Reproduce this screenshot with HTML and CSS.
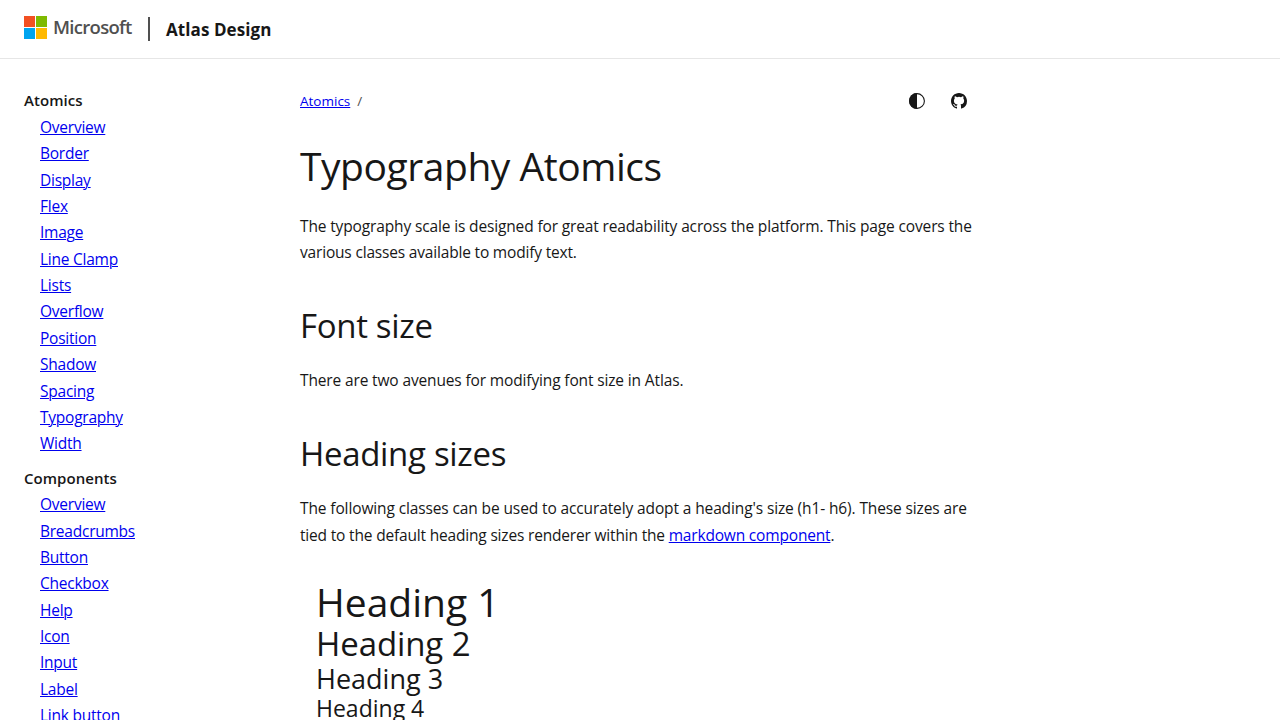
FILE: index.html
```html
<!DOCTYPE html>
<html lang="en">
<head>
<meta charset="utf-8">
<title>Typography Atomics - Atlas Design</title>
<link rel="stylesheet" href="styles.css">
</head>
<body>
<header class="header">
  <a class="brand">
    <svg class="brand-mark" width="23" height="23" viewBox="0 0 23 23" shape-rendering="crispEdges"><path fill="#f25022" d="M0 0h11v11H0z"/><path fill="#7fba00" d="M12 0h11v11H12z"/><path fill="#00a4ef" d="M0 12h11v11H0z"/><path fill="#ffb900" d="M12 12h11v11H12z"/></svg>
    <span class="brand-name">Microsoft</span>
  </a>
  <span class="divider"></span>
  <span class="site-name">Atlas Design</span>
</header>
<div class="layout">
  <nav class="sidebar">
    <section class="group">
      <p class="group-title">Atomics</p>
      <ul class="links">
        <li><a href="#">Overview</a></li>
        <li><a href="#">Border</a></li>
        <li><a href="#">Display</a></li>
        <li><a href="#">Flex</a></li>
        <li><a href="#">Image</a></li>
        <li><a href="#">Line Clamp</a></li>
        <li><a href="#">Lists</a></li>
        <li><a href="#">Overflow</a></li>
        <li><a href="#">Position</a></li>
        <li><a href="#">Shadow</a></li>
        <li><a href="#">Spacing</a></li>
        <li><a href="#">Typography</a></li>
        <li><a href="#">Width</a></li>
      </ul>
    </section>
    <section class="group">
      <p class="group-title">Components</p>
      <ul class="links">
        <li><a href="#">Overview</a></li>
        <li><a href="#">Breadcrumbs</a></li>
        <li><a href="#">Button</a></li>
        <li><a href="#">Checkbox</a></li>
        <li><a href="#">Help</a></li>
        <li><a href="#">Icon</a></li>
        <li><a href="#">Input</a></li>
        <li><a href="#">Label</a></li>
        <li><a href="#">Link button</a></li>
      </ul>
    </section>
  </nav>
  <main class="content">
    <div class="toolbar">
      <div class="crumbs"><a href="#">Atomics</a><span class="slash">/</span></div>
      <div class="actions">
        <svg width="16" height="16" viewBox="0 0 16 16"><circle cx="8" cy="8" r="7.4" fill="none" stroke="#171717" stroke-width="1.1"/><path fill="#171717" d="M8 0a8 8 0 0 0 0 16z"/></svg>
        <svg width="16" height="16" viewBox="0 0 16 16"><path fill="#171717" d="M8 0C3.58 0 0 3.58 0 8c0 3.54 2.29 6.53 5.47 7.59.4.07.55-.17.55-.38 0-.19-.01-.82-.01-1.49-2.01.37-2.53-.49-2.69-.94-.09-.23-.48-.94-.82-1.13-.28-.15-.68-.52-.01-.53.63-.01 1.08.58 1.23.82.72 1.21 1.87.87 2.33.66.07-.52.28-.87.51-1.07-1.78-.2-3.64-.89-3.64-3.95 0-.87.31-1.59.82-2.15-.08-.2-.36-1.02.08-2.12 0 0 .67-.21 2.2.82a7.6 7.6 0 0 1 4 0c1.53-1.04 2.2-.82 2.2-.82.44 1.1.16 1.92.08 2.12.51.56.82 1.27.82 2.15 0 3.07-1.87 3.75-3.65 3.95.29.25.54.73.54 1.48 0 1.07-.01 1.93-.01 2.2 0 .21.15.46.55.38A8.01 8.01 0 0 0 16 8c0-4.42-3.58-8-8-8z"/></svg>
      </div>
    </div>
    <h1 class="title">Typography Atomics</h1>
    <p class="text intro">The typography scale is designed for great readability across the platform. This page covers the<br><span class="tight">various classes available to modify text.</span></p>
    <h2 class="subtitle">Font size</h2>
    <p class="text">There are two avenues for modifying font size in Atlas.</p>
    <h2 class="subtitle">Heading sizes</h2>
    <p class="text sizes">The following classes can be used to accurately adopt a heading's size (h1- h6). These sizes are<br><span class="tight">tied to the default heading sizes renderer within the <a href="#">markdown component</a>.</span></p>
    <div class="sample">
      <p class="size-h1">Heading 1</p>
      <p class="size-h2">Heading 2</p>
      <p class="size-h3">Heading 3</p>
      <p class="size-h4">Heading 4</p>
    </div>
  </main>
</div>
</body>
</html>
```
FILE: styles.css
```css
* { box-sizing: border-box; margin: 0; padding: 0; }
html, body { height: 720px; overflow: hidden; }
body {
  background: #fff;
  color: #171717;
  font-family: "Open Sans", "Noto Sans", sans-serif;
  font-size: 15.5px;
  line-height: 26.36px;
}
a[href] { color: #0000ee; text-decoration: underline; text-underline-offset: 1px; text-decoration-thickness: 1px; }
.header {
  display: flex;
  align-items: center;
  height: 59px;
  padding: 0 24px;
  border-bottom: 1px solid #e6e6e6;
}
.brand { display: flex; align-items: center; gap: 6px; padding-bottom: 3px; }
.brand-mark { display: block; }
.brand-name { width: 80px; color: #505050; font-size: 18.5px; font-weight: 600; letter-spacing: -0.7px; line-height: 21px; padding-bottom: 2px; }
.divider { width: 2px; height: 24px; margin: 0 16px 0 15px; background: #505050; }
.site-name { padding-top: 2px; font-size: 17px; font-weight: 700; letter-spacing: 0.08px; }
.layout { display: flex; height: 661px; }
.sidebar { width: 276px; padding: 28.4px 0 0 24px; }
.group { margin-bottom: 8px; }
.group-title { font-weight: 600; font-size: 15px; letter-spacing: 0.05px; }
.links { list-style: none; padding: 0.2px 0 0 16px; letter-spacing: -0.24px; }
.content { width: 692px; padding: 29px 0 0 24px; }
.toolbar { display: flex; justify-content: space-between; align-items: center; height: 26px; padding-right: 1px; }
.crumbs { display: flex; gap: 7px; font-size: 13.5px; }
.slash { color: #505050; }
.actions { display: flex; gap: 26px; }
.title { margin-top: 26px; font-size: 39px; font-weight: 400; line-height: 52px; letter-spacing: -0.45px; }
.subtitle { margin-top: 38.6px; margin-bottom: 19px; font-size: 33px; font-weight: 400; line-height: 44px; letter-spacing: -0.32px; }
.text { white-space: nowrap; letter-spacing: -0.14px; }
.tight { letter-spacing: -0.18px; }
.intro { margin-top: 21px; }
.sizes { letter-spacing: -0.12px; }
.sample { padding: 32.4px 0 0 16px; }
.size-h1 { font-size: 39px; line-height: 44px; }
.size-h2 { font-size: 33px; line-height: 39px; letter-spacing: -0.1px; }
.size-h3 { font-size: 27px; line-height: 32px; }
.size-h4 { font-size: 23px; line-height: 27px; }
```
